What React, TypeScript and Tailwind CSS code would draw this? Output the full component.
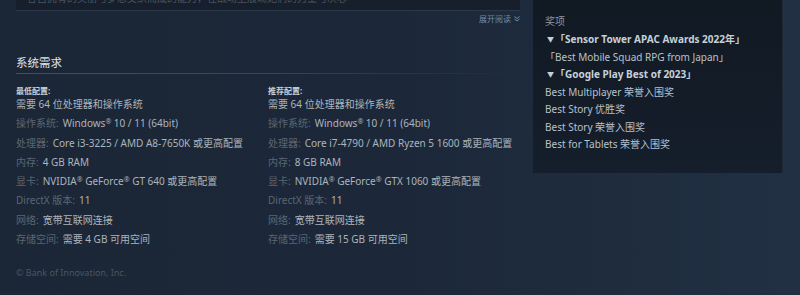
const R = () => <sup className="text-[7px] top-[-0.45em]">®</sup>;

type Row = { label?: string; value: React.ReactNode };

const minRows: Row[] = [
  { value: "需要 64 位处理器和操作系统" },
  { label: "操作系统:", value: <>Windows<R /> 10 / 11 (64bit)</> },
  { label: "处理器:", value: "Core i3-3225 / AMD A8-7650K 或更高配置" },
  { label: "内存:", value: "4 GB RAM" },
  { label: "显卡:", value: <>NVIDIA<R /> GeForce<R /> GT 640 或更高配置</> },
  { label: "DirectX 版本:", value: "11" },
  { label: "网络:", value: "宽带互联网连接" },
  { label: "存储空间:", value: "需要 4 GB 可用空间" },
];

const recRows: Row[] = [
  { value: "需要 64 位处理器和操作系统" },
  { label: "操作系统:", value: <>Windows<R /> 10 / 11 (64bit)</> },
  { label: "处理器:", value: "Core i7-4790 / AMD Ryzen 5 1600 或更高配置" },
  { label: "内存:", value: "8 GB RAM" },
  { label: "显卡:", value: <>NVIDIA<R /> GeForce<R /> GTX 1060 或更高配置</> },
  { label: "DirectX 版本:", value: "11" },
  { label: "网络:", value: "宽带互联网连接" },
  { label: "存储空间:", value: "需要 15 GB 可用空间" },
];

function SpecColumn({ title, rows }: { title: string; rows: Row[] }) {
  return (
    <div className="w-[252px]">
      <div className="h-[8px] leading-[8px] text-[8px] font-bold text-[#c7d0d8]">{title}</div>
      <div className="text-[10px] leading-[19.3px]">
        {rows.map((r, i) => (
          <div key={i} className="whitespace-nowrap">
            {r.label && <span className="text-[#5b6671] mr-[4px]">{r.label}</span>}
            <span className="text-[#acb4bc]">{r.value}</span>
          </div>
        ))}
      </div>
    </div>
  );
}

const awards: { text: string; bold?: boolean; arrow?: boolean }[] = [
  { text: "「Sensor Tower APAC Awards 2022年」", bold: true, arrow: true },
  { text: "「Best Mobile Squad RPG from Japan」" },
  { text: "「Google Play Best of 2023」", bold: true, arrow: true },
  { text: "Best Multiplayer 荣誉入围奖" },
  { text: "Best Story 优胜奖" },
  { text: "Best Story 荣誉入围奖" },
  { text: "Best for Tablets 荣誉入围奖" },
];

export default function App() {
  return (
    <div className="w-[800px] h-[295px] overflow-hidden flex bg-gradient-to-r from-[#1b2636] via-[#1c2839] to-[#213043] font-['Noto_Sans','Noto_Sans_CJK_SC',sans-serif]">
      {/* left column */}
      <div className="ml-4 w-[504px] flex flex-col">
        <div className="h-[11px] overflow-hidden bg-[#161f2b] border-b border-[#2b3a4b] pl-[11px]">
          <div className="-mt-[9px] text-[10px] leading-[14px] text-[#4a5561] whitespace-nowrap">
            各自拥有的美丽与梦想交织而成的能力，在战场上展现她们的力量与决心
          </div>
        </div>
        <div className="h-[12px] mt-[2px] flex items-center justify-end gap-[3px] text-[8px] text-[#6a8db2]">
          <span>展开阅读</span>
          <svg width="6" height="6" viewBox="0 0 6 6" fill="none" stroke="#6a8db2" strokeWidth="1">
            <path d="M0.5 0.5 L3 2.5 L5.5 0.5" />
            <path d="M0.5 3 L3 5 L5.5 3" />
          </svg>
        </div>
        <div className="mt-[30px] h-[16px] leading-[16px] text-[11.5px] text-[#e0e4e8]">系统需求</div>
        <div className="mt-[2px] h-[1px] bg-gradient-to-r from-[#3d5166] via-[#34475a] to-transparent" />
        <div className="mt-[13px] flex">
          <SpecColumn title="最低配置:" rows={minRows} />
          <SpecColumn title="推荐配置:" rows={recRows} />
        </div>
        <div className="mt-[18px] text-[9px] leading-[12px] text-[#4a5663]">© Bank of Innovation, Inc.</div>
      </div>

      {/* right column */}
      <div className="ml-[13px] w-[250px] h-[173px] bg-gradient-to-b from-[#111923] to-[#151e2b] border-r border-[#1f2a38] pl-[12px] pt-[12px]">
        <div className="text-[10px] leading-[18px] text-[#8f98a0]">奖项</div>
        <div className="mt-[1px] text-[10px] leading-[17.5px] text-[#b8c2cb]">
          {awards.map((a, i) => (
            <div key={i} className={`flex items-center whitespace-nowrap ${a.bold ? "font-bold text-[#c6d0d8]" : ""}`}>
              {a.arrow && <span className="text-[7px] ml-[2px] mr-[1px]">▼</span>}
              <span>{a.text}</span>
            </div>
          ))}
        </div>
      </div>
    </div>
  );
}
